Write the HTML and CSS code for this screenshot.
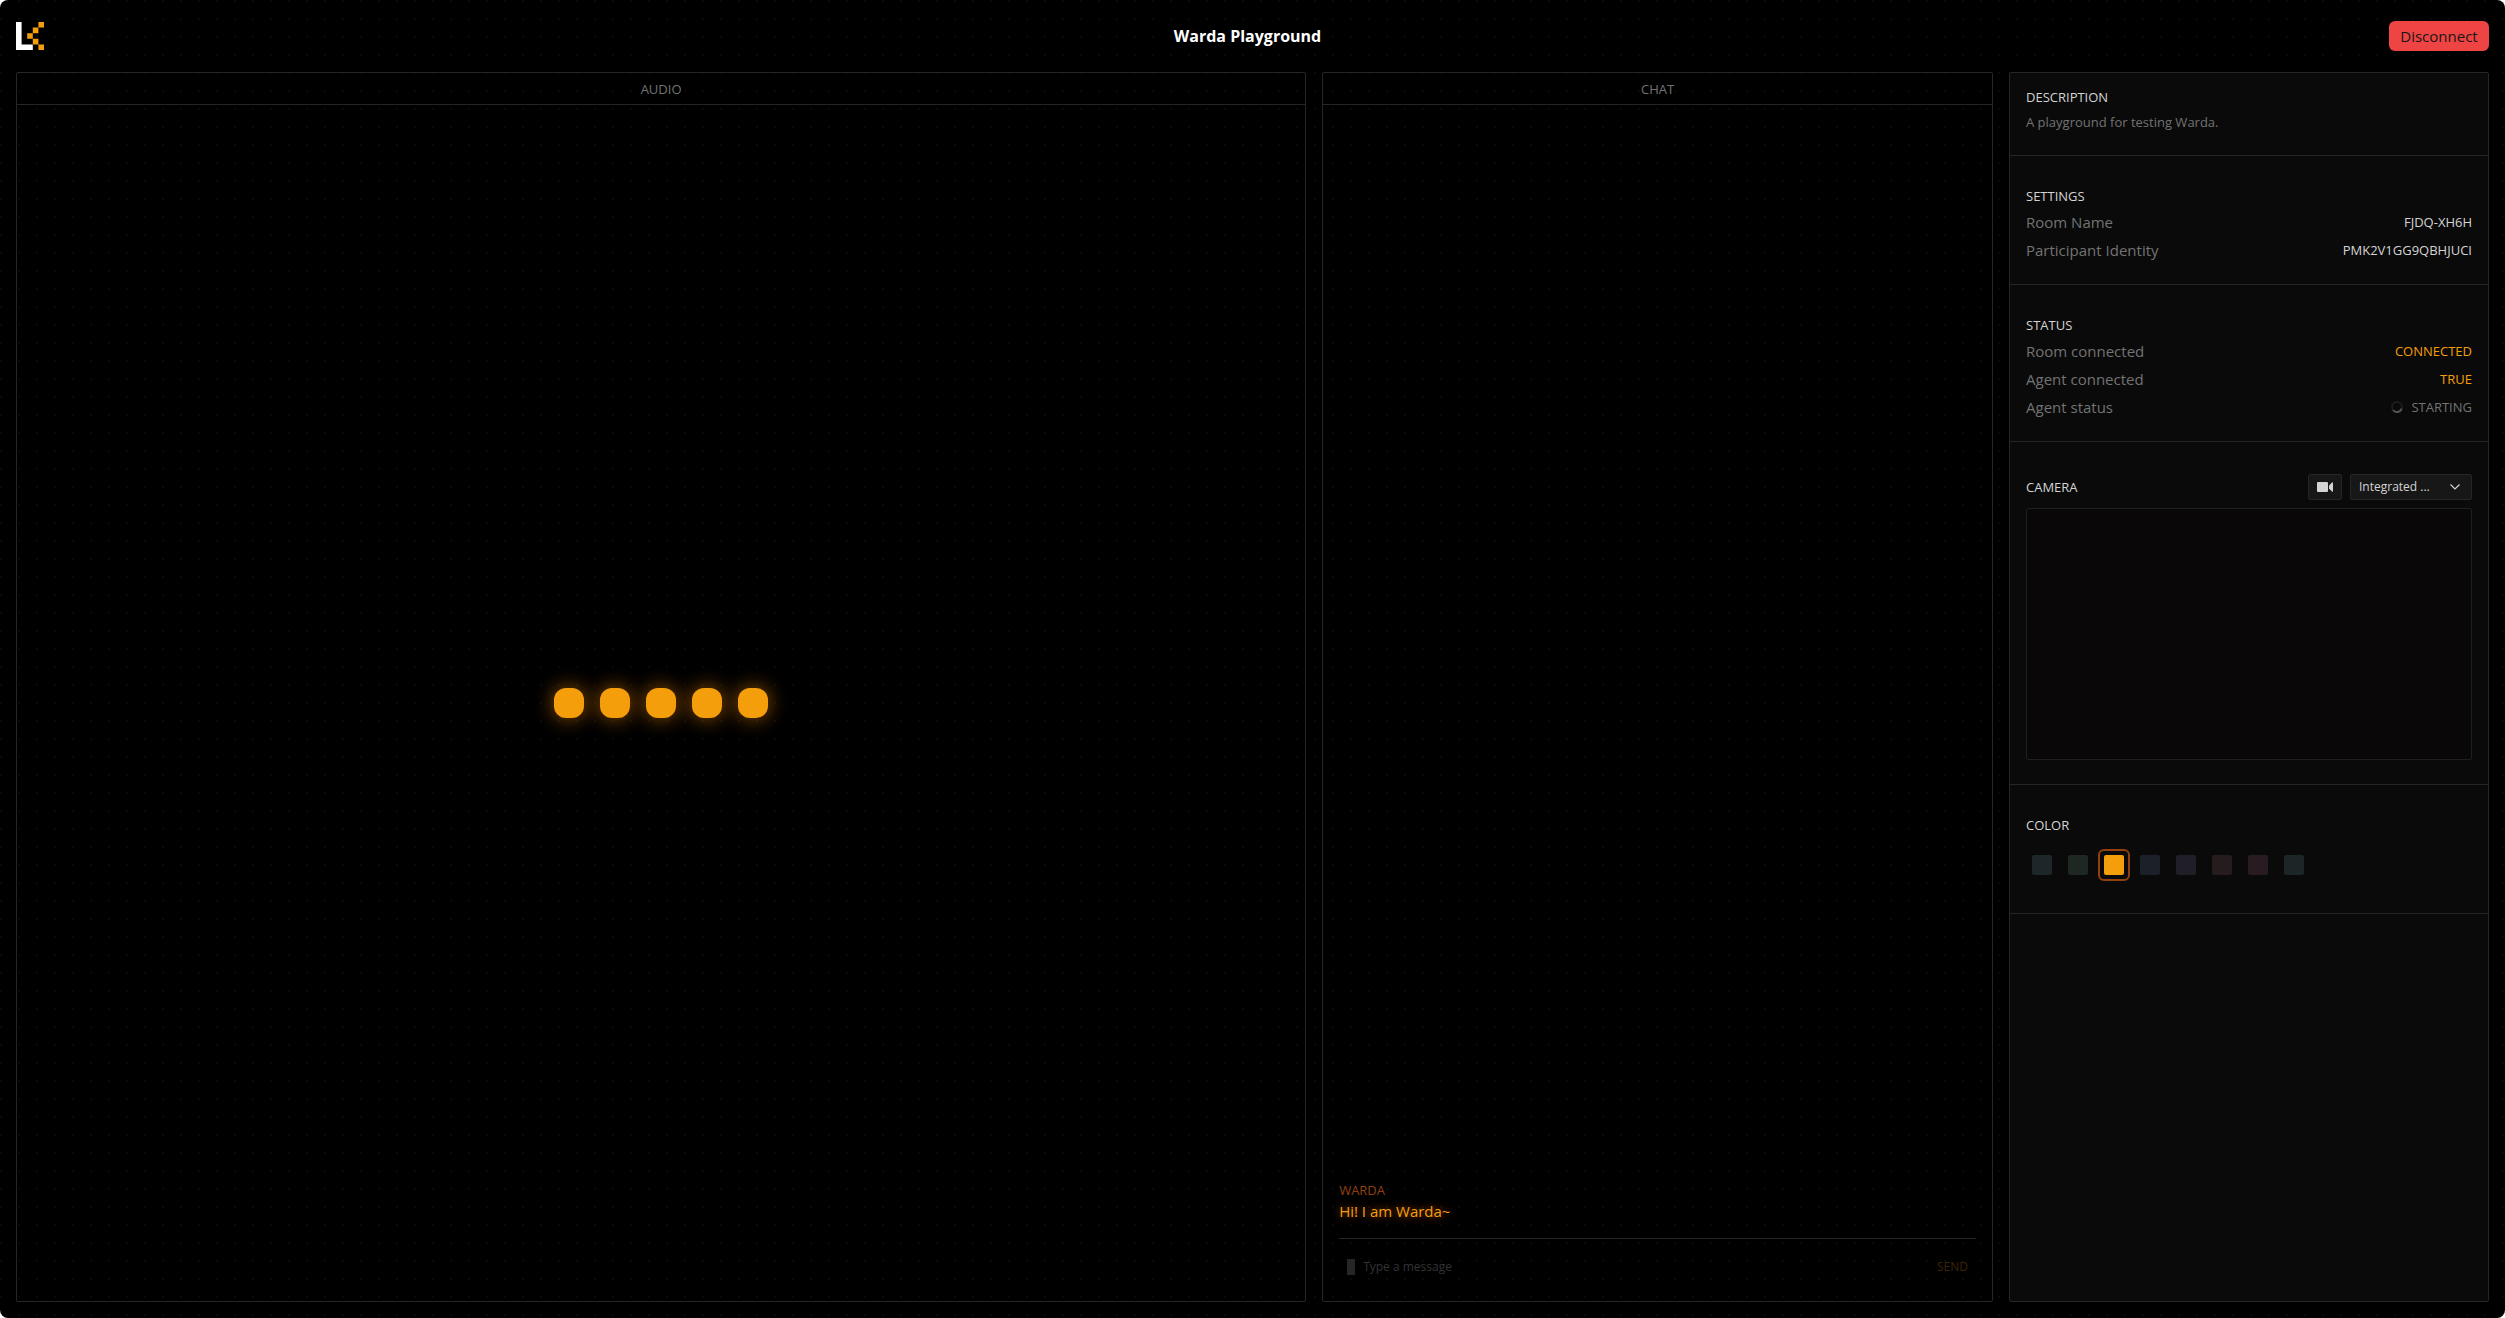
FILE: index.html
```html
<!DOCTYPE html>
<html lang="en">
<head>
<meta charset="utf-8">
<title>Warda Playground</title>
<meta name="viewport" content="width=device-width, initial-scale=1">
<link rel="stylesheet" href="styles.css">
</head>
<body>
<div class="app">
  <header class="topbar">
    <a class="logo" href="#" aria-label="Home">
      <svg viewBox="0 0 5 5" width="28" height="28" aria-hidden="true">
        <path fill="#fff" d="M0 0H1V4H3V5H0Z"/>
        <path fill="#f59e0b" d="M4 0H5V1H4ZM3 1H4V2H3ZM2 2H3V3H2ZM3 3H4V4H3ZM4 4H5V5H4Z"/>
      </svg>
    </a>
    <h1 class="title">Warda Playground</h1>
    <div class="actions"><button class="disconnect" type="button">Disconnect</button></div>
  </header>

  <main class="tiles">
    <section class="tile">
      <h2 class="tile-title">Audio</h2>
      <div class="visualizer">
        <span class="bar"></span><span class="bar"></span><span class="bar"></span><span class="bar"></span><span class="bar"></span>
      </div>
    </section>

    <section class="tile">
      <h2 class="tile-title">Chat</h2>
      <div class="chat">
        <div class="messages">
          <div class="sender">Warda</div>
          <div class="message">Hi! I am Warda~</div>
        </div>
        <form class="composer">
          <span class="caret"></span>
          <input class="composer-input" type="text" placeholder="Type a message" aria-label="Message">
          <button class="send" type="button">Send</button>
        </form>
      </div>
    </section>

    <aside class="tile settings">
      <section class="group">
        <h2 class="group-title">Description</h2>
        <p class="description">A playground for testing Warda.</p>
      </section>
      <section class="group">
        <h2 class="group-title">Settings</h2>
        <dl class="rows">
          <div class="row"><dt>Room Name</dt><dd>FJDQ-XH6H</dd></div>
          <div class="row"><dt>Participant Identity</dt><dd>PMK2V1GG9QBHJUCI</dd></div>
        </dl>
      </section>
      <section class="group">
        <h2 class="group-title">Status</h2>
        <dl class="rows">
          <div class="row"><dt>Room connected</dt><dd class="on">CONNECTED</dd></div>
          <div class="row"><dt>Agent connected</dt><dd class="on">TRUE</dd></div>
          <div class="row"><dt>Agent status</dt><dd class="pending">
            <svg class="spinner" viewBox="0 0 12 12" width="12" height="12" aria-hidden="true">
              <circle cx="6" cy="6" r="5" fill="none" stroke="#1c1c1c" stroke-width="2"/>
              <path d="M10.7 7.7A5 5 0 0 1 2 9" fill="none" stroke="#525252" stroke-width="2"/>
            </svg>STARTING</dd></div>
        </dl>
      </section>
      <section class="group">
        <div class="camera-head">
          <h2 class="group-title">Camera</h2>
          <button class="control camera-toggle" type="button" aria-label="Toggle camera">
            <svg viewBox="0 0 16 10" width="16" height="10" aria-hidden="true">
              <rect width="11" height="10" rx="1" fill="#d4d4d4"/>
              <path fill="#d4d4d4" d="M12 3.6L15 .4Q16 0 16 1V9Q16 10 15 9.6L12 6.4Z"/>
            </svg>
          </button>
          <div class="device">
            <select class="control device-select" aria-label="Camera device"><option>Integrated ...</option></select>
            <svg class="chevron" viewBox="0 0 10 6" width="10" height="6" aria-hidden="true">
              <path d="M.5 .5L5 5L9.5 .5" fill="none" stroke="#d4d4d4" stroke-width="1.2"/>
            </svg>
          </div>
        </div>
        <div class="preview"></div>
      </section>
      <section class="group">
        <h2 class="group-title">Color</h2>
        <div class="swatches">
          <input class="swatch cyan" type="radio" name="color" aria-label="Cyan">
          <input class="swatch green" type="radio" name="color" aria-label="Green">
          <input class="swatch amber" type="radio" name="color" aria-label="Amber" checked>
          <input class="swatch blue" type="radio" name="color" aria-label="Blue">
          <input class="swatch violet" type="radio" name="color" aria-label="Violet">
          <input class="swatch rose" type="radio" name="color" aria-label="Rose">
          <input class="swatch pink" type="radio" name="color" aria-label="Pink">
          <input class="swatch teal" type="radio" name="color" aria-label="Teal">
        </div>
      </section>
    </aside>
  </main>
</div>
</body>
</html>
```

FILE: styles.css
```css
:root {
  --amber: #f59e0b;
  --line: #262626;
  --muted: #737373;
  --text: #d4d4d4;
}

* { box-sizing: border-box; }

html { background: #fff; }

body {
  margin: 0;
  font-family: "Segoe UI", "Open Sans", "Noto Sans", sans-serif;
  font-size: 15px;
  line-height: 20px;
  color: var(--text);
}

h1, h2, p, dl, dt, dd { margin: 0; font-weight: 400; }

button, input, select { font: inherit; color: inherit; margin: 0; }

.app {
  display: flex;
  flex-direction: column;
  min-height: 100vh;
  padding: 0 16px 16px;
  border-radius: 8px;
  background-color: #000;
  background-image: conic-gradient(from 270deg at 2px 2px, #0a0a0a 90deg, transparent 0);
  background-size: 18px 18px;
}

.topbar {
  display: grid;
  grid-template-columns: 1fr auto 1fr;
  align-items: center;
  height: 72px;
}

.logo svg { display: block; }

.title { padding-right: 10px; font-size: 16px; font-weight: 700; color: #fff; }

.actions { text-align: right; }

.disconnect {
  width: 100px;
  height: 30px;
  padding: 0;
  border: 0;
  border-radius: 6px;
  background: #ef4444;
  color: #171717;
}

.tiles {
  flex: 1;
  display: grid;
  grid-template-columns: 25fr 13fr 480px;
  gap: 16px;
}

.tile {
  display: flex;
  flex-direction: column;
  border: 1px solid var(--line);
  border-radius: 2px;
}

.tile-title {
  padding: 6px 0 5px;
  border-bottom: 1px solid var(--line);
  font-size: 13px;
  text-align: center;
  text-transform: uppercase;
  color: var(--muted);
}

.visualizer {
  flex: 1;
  display: flex;
  align-items: center;
  justify-content: center;
  gap: 16px;
}

.bar {
  width: 30px;
  height: 30px;
  border-radius: 12px;
  background: var(--amber);
  box-shadow: 0 0 20px rgba(217, 119, 6, 0.7);
}

.chat {
  flex: 1;
  display: flex;
  flex-direction: column;
  padding: 0 16px 16px;
}

.messages {
  flex: 1;
  display: flex;
  flex-direction: column;
  justify-content: flex-end;
  padding-bottom: 15px;
}

.sender {
  font-size: 13px;
  line-height: 18px;
  text-transform: uppercase;
  color: #92400e;
}

.message {
  line-height: 24px;
  color: var(--amber);
  text-shadow: 0 0 8px #b45309;
}

.composer {
  display: flex;
  align-items: center;
  gap: 8px;
  height: 47px;
  padding: 10px 8px 0;
  border-top: 1px solid var(--line);
  font-size: 12px;
}

.caret { width: 8px; height: 16px; background: var(--line); }

.composer-input {
  flex: 1;
  min-width: 0;
  padding: 0;
  border: 0;
  outline: 0;
  background: none;
}

.composer-input::placeholder { color: #333; opacity: 1; }

.send {
  padding: 0;
  border: 0;
  background: none;
  text-transform: uppercase;
  color: #3b2503;
}

.settings { background: #0a0a0a; }

.group {
  padding: 32px 16px 24px;
  border-bottom: 1px solid var(--line);
}

.group:first-child { padding-top: 16px; }

.group-title {
  font-size: 13px;
  line-height: 16px;
  text-transform: uppercase;
}

.description {
  margin-top: 8px;
  font-size: 13px;
  line-height: 18px;
  color: var(--muted);
}

.rows { display: grid; gap: 8px; margin-top: 8px; }

.row {
  display: flex;
  align-items: center;
  justify-content: space-between;
  color: var(--muted);
}

.row dd { font-size: 13px; color: var(--text); }
.row .on { color: var(--amber); }
.row .pending { display: flex; align-items: center; gap: 8px; color: var(--muted); }

.camera-head { display: flex; align-items: center; gap: 8px; }
.camera-head .group-title { flex: 1; }

.control {
  display: block;
  height: 26px;
  border: 1px solid var(--line);
  border-radius: 2px;
  background: #171717;
}

.camera-toggle { width: 34px; padding: 0 8px; }
.camera-toggle svg { display: block; }

.device { position: relative; width: 122px; }

.device-select {
  width: 100%;
  padding: 0 8px;
  appearance: none;
  font-size: 12px;
}

.chevron { position: absolute; top: 10px; right: 12px; pointer-events: none; }

.preview {
  height: 252px;
  margin-top: 8px;
  border: 1px solid #1f1f1f;
  border-radius: 2px;
  background: #0a0708;
}

.swatches { display: flex; gap: 4px; padding: 16px 0 8px; }

.swatch {
  width: 32px;
  height: 32px;
  padding: 4px;
  appearance: none;
  border: 2px solid transparent;
  border-radius: 6px;
}

.swatch::before {
  content: "";
  display: block;
  height: 20px;
  border-radius: 2px;
  background: currentColor;
}

.swatch:checked { border-color: #92400e; }

.cyan { color: #1d272a; }
.green { color: #1f2723; }
.amber { color: var(--amber); }
.blue { color: #1c2029; }
.violet { color: #201e26; }
.rose { color: #271c1d; }
.pink { color: #281c22; }
.teal { color: #1d2626; }
```
